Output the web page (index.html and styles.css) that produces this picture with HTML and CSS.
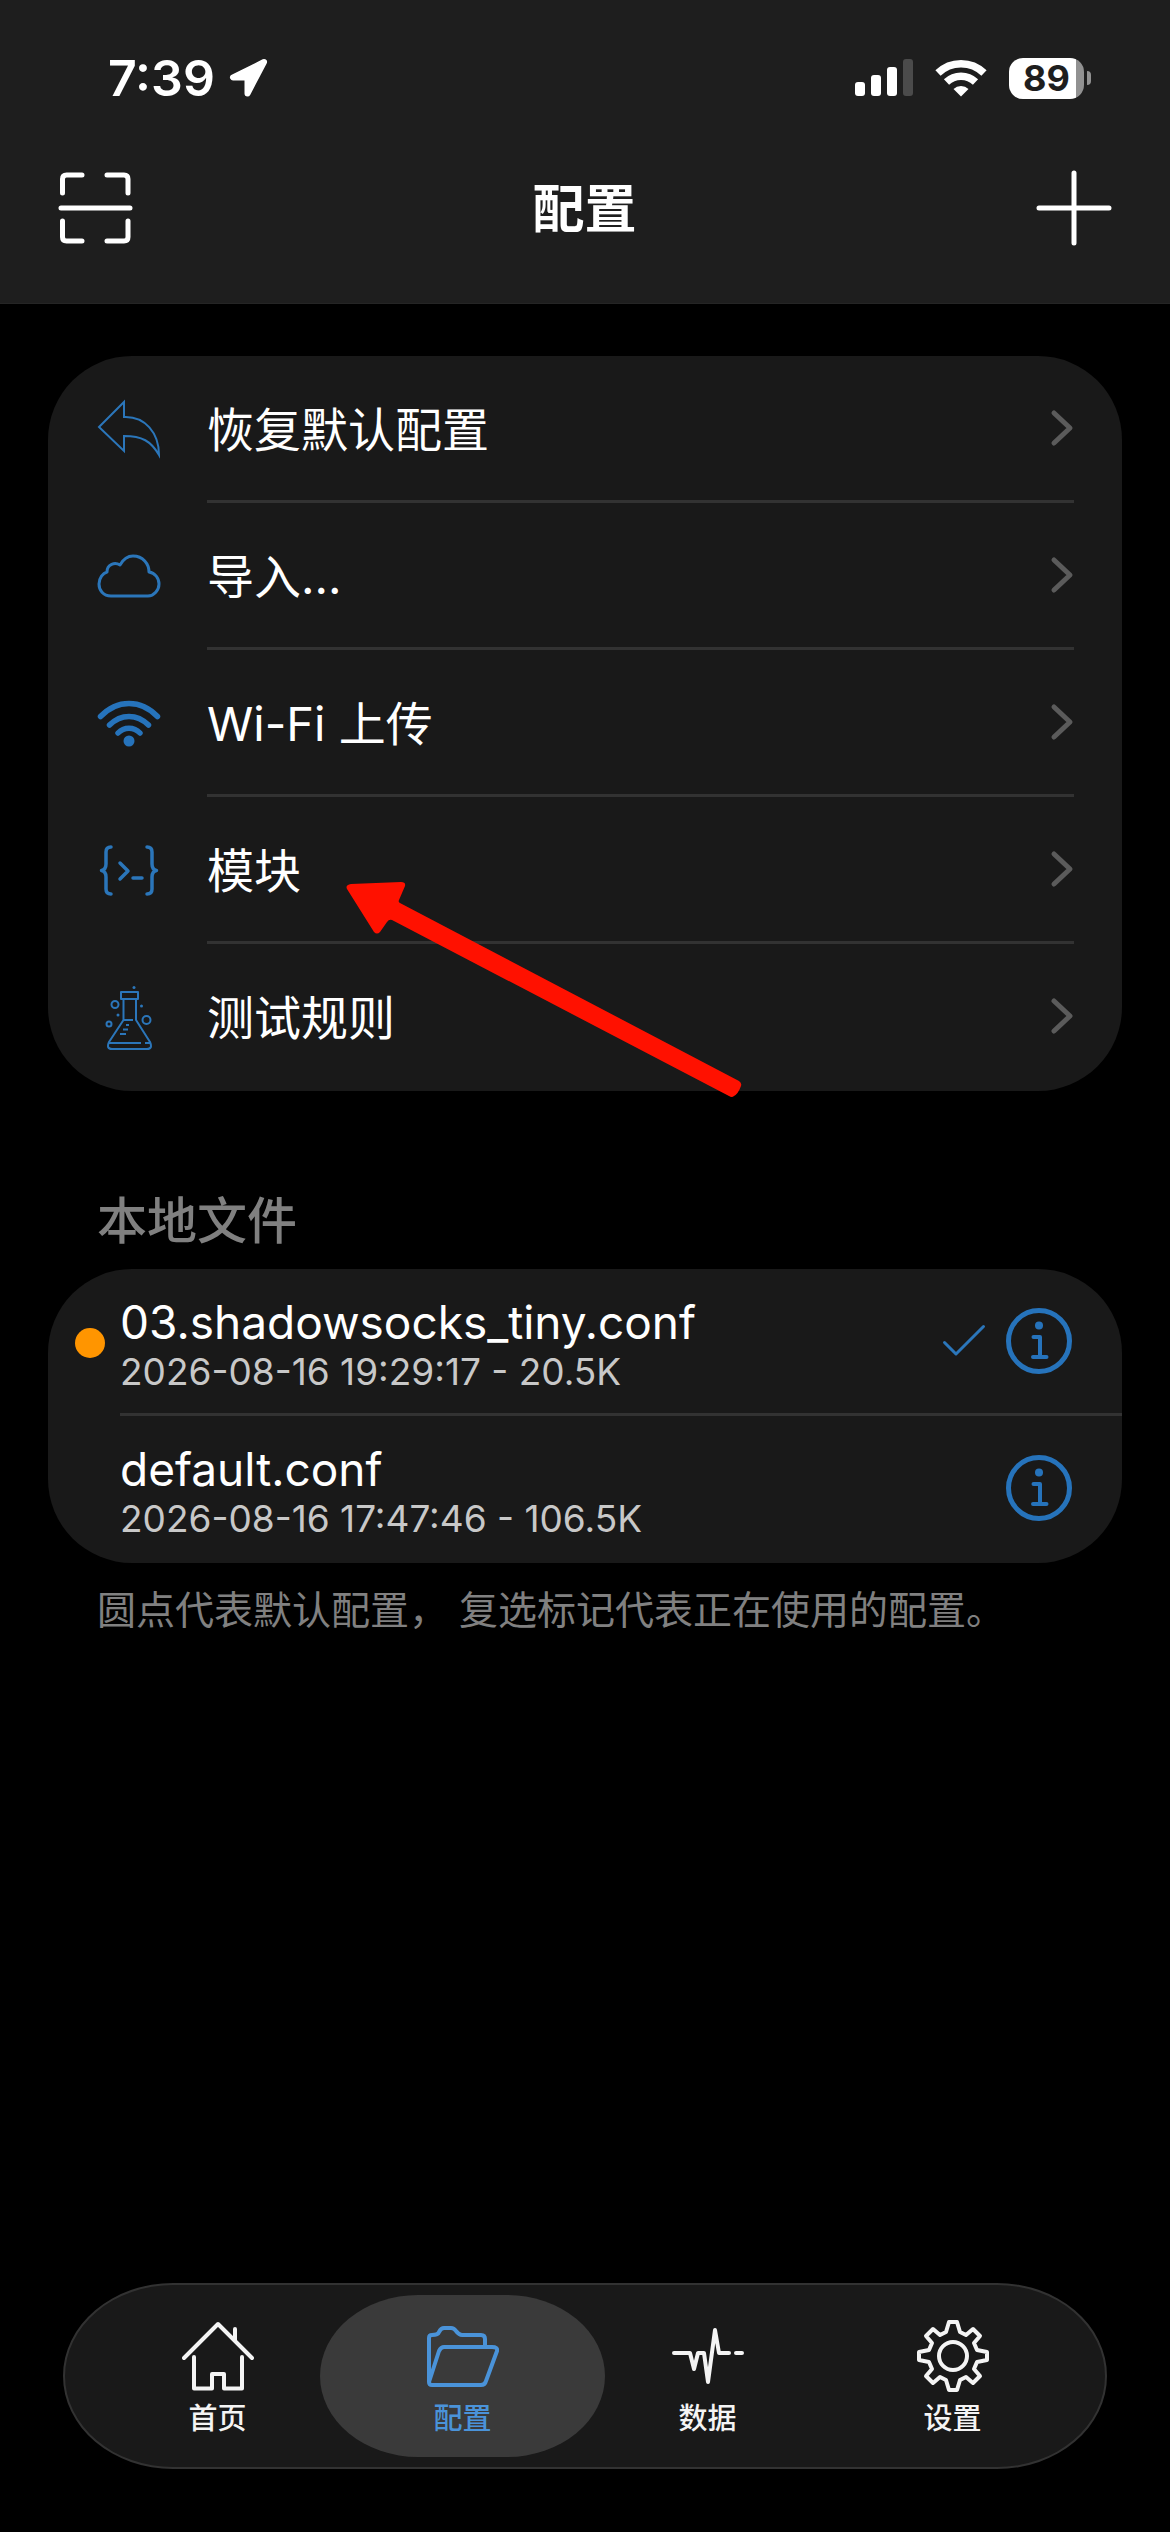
FILE: index.html
```html
<!DOCTYPE html>
<html lang="zh-CN">
<head>
<meta charset="utf-8">
<meta name="viewport" content="width=device-width, initial-scale=1">
<title>配置</title>
<link rel="stylesheet" href="styles.css">
</head>
<body>
<div class="app">
  <header class="header">
    <div class="status">
      <div class="status-left">
        <span class="time">7:39</span>
        <svg class="location" width="40" height="40" viewBox="0 0 40 40" aria-hidden="true"><path d="M35 4 4 19.500H18.500V35.500Z" fill="#fff" stroke="#fff" stroke-width="6" stroke-linejoin="round"/></svg>
      </div>
      <div class="status-right">
        <svg width="58" height="38" viewBox="0 0 58 38" aria-hidden="true"><g fill="#fff"><rect x="0" y="23" width="10" height="14" rx="3"/><rect x="16" y="16" width="10" height="21" rx="3"/><rect x="32" y="8" width="10" height="29" rx="3"/><rect x="48" y="0" width="10" height="37" rx="3" fill="#4b4b4b"/></g></svg>
        <svg width="52" height="38" viewBox="0 0 52 38" aria-hidden="true"><g fill="none" stroke="#fff" stroke-width="7.500"><path d="M3 14a33 33 0 0 1 46 0"/><path d="M11.500 23a21 21 0 0 1 29 0"/></g><path d="M18.500 30a11 11 0 0 1 15 0L26 37.500Z" fill="#fff"/></svg>
        <div class="battery"><span class="battery-body">89</span><span class="battery-nub"></span></div>
      </div>
    </div>
    <div class="nav">
      <button class="icon-button" type="button" aria-label="扫描">
        <svg width="76" height="76" viewBox="0 0 76 76" fill="none" stroke="#fff" stroke-width="5" stroke-linecap="round" stroke-linejoin="round"><path d="M5.500 23V9q0-4 4-4H25M50 5h17q4 0 4 4v14M71 51v16q0 4-4 4H50M25 71H9.500q-4 0-4-4V51M4 38h69"/></svg>
      </button>
      <h1 class="title">配置</h1>
      <button class="icon-button" type="button" aria-label="添加">
        <svg width="76" height="76" viewBox="0 0 76 76" fill="none" stroke="#fff" stroke-width="5" stroke-linecap="round"><path d="M38 3v70M3 38h70"/></svg>
      </button>
    </div>
  </header>

  <main class="content">
    <nav class="card menu">
      <a class="menu-row" href="#restore">
        <svg class="menu-icon" viewBox="0 0 64 64" fill="none" stroke="#2b76ba" stroke-width="2"><path d="M27 4V19C48 18 62 35 62 57C54 43 45 38 27 38V53L2 29Z"/></svg>
        <span class="menu-body"><span class="menu-label">恢复默认配置</span><svg class="chevron" viewBox="0 0 24 38"><path d="M4 4l16 15L4 34"/></svg></span>
      </a>
      <a class="menu-row" href="#import">
        <svg class="menu-icon" viewBox="0 0 64 64" fill="none" stroke="#2b76ba" stroke-width="3" stroke-linejoin="round"><path d="M14 51C6 51 2 45 2 39C2 33 6 28 10 27C10 19 18 17 23 20C27 13 32 11 36 11C46 11 52 19 52 27C58 28 62 33 62 39C62 45 57 51 51 51Z"/></svg>
        <span class="menu-body"><span class="menu-label">导入...</span><svg class="chevron" viewBox="0 0 24 38"><path d="M4 4l16 15L4 34"/></svg></span>
      </a>
      <a class="menu-row" href="#wifi">
        <svg class="menu-icon" viewBox="0 0 64 64" fill="none" stroke="#2673bb" stroke-width="5.500" stroke-linecap="round"><path d="M3.500 24.500C20 7 44 7 60.500 24.500M12.500 33C24 21.500 40 21.500 51.500 33M21 41C27 34.500 37 34.500 43 41"/><circle cx="32" cy="49" r="5.500" fill="#2673bb" stroke="none"/></svg>
        <span class="menu-body"><span class="menu-label">Wi-Fi 上传</span><svg class="chevron" viewBox="0 0 24 38"><path d="M4 4l16 15L4 34"/></svg></span>
      </a>
      <a class="menu-row" href="#modules">
        <svg class="menu-icon" viewBox="0 0 64 64" fill="none" stroke="#2b76ba" stroke-width="3.500" stroke-linecap="round" stroke-linejoin="round"><path d="M14 8C10 8 9 10 9 13V25C9 29 7 31 4.500 31.500C7 32 9 34 9 38V50C9 53 10 55 14 55M50 8C54 8 55 10 55 13V25C55 29 57 31 59.500 31.500C57 32 55 34 55 38V50C55 53 54 55 50 55M23 24l8 8-8 8M36 39h9"/></svg>
        <span class="menu-body"><span class="menu-label">模块</span><svg class="chevron" viewBox="0 0 24 38"><path d="M4 4l16 15L4 34"/></svg></span>
      </a>
      <a class="menu-row" href="#rules">
        <svg class="menu-icon" viewBox="0 0 64 64" fill="none" stroke="#2b76ba" stroke-width="2" stroke-linejoin="round"><path d="M24 6H41V13H24ZM26.500 13V34L12 56Q9 63 15 63H50Q56 63 53 56L39 34V13M27 34H36M12 57H44M48 57H53M29 39H32M26 43.500H31M23 48H29"/><circle cx="18" cy="18.500" r="3.500"/><circle cx="49.500" cy="34" r="4"/><circle cx="12" cy="38" r="2.500"/><g fill="#2b76ba" stroke="none"><circle cx="37" cy="1.500" r="1.500"/><circle cx="44.500" cy="20" r="1.500"/><circle cx="21" cy="29" r="1.500"/></g></svg>
        <span class="menu-body"><span class="menu-label">测试规则</span><svg class="chevron" viewBox="0 0 24 38"><path d="M4 4l16 15L4 34"/></svg></span>
      </a>
      <svg class="pointer" viewBox="0 0 398 218" aria-hidden="true"><path d="M5 4 55 2Q60 2 59 6L53 20Q52 22 54 23L393 201Q396 203 395 206Q392 214 388 216Q386 218 383 216L46 40Q43 39 41 42L34 52Q31 55 28 52L1 9Q-1 5 5 4Z" fill="#ff1100"/></svg>
    </nav>

    <section class="files">
      <h2 class="section-title">本地文件</h2>
      <ul class="card file-list">
        <li class="file-row">
          <span class="dot"></span>
          <div class="file-body">
            <div class="file-text"><span class="file-name">03.shadowsocks_tiny.conf</span><span class="file-meta">2026-08-16 19:29:17 - 20.5K</span></div>
            <svg class="check" viewBox="0 0 44 34" fill="none" stroke="#2b76ba" stroke-width="3" stroke-linecap="round" stroke-linejoin="round"><path d="M2.500 18.500 14 30 41.500 2.500"/></svg>
            <button class="info" type="button" aria-label="详情"><svg width="66" height="66" viewBox="0 0 66 66" fill="none" stroke="#2673bb" stroke-linecap="round" stroke-linejoin="round"><circle cx="33" cy="33" r="30.500" stroke-width="5"/><path d="M27.500 29H34V48.500M27 49H40.500" stroke-width="4"/><circle cx="33" cy="17.500" r="4" fill="#2673bb" stroke="none"/></svg></button>
          </div>
        </li>
        <li class="file-row">
          <span class="dot dot-empty"></span>
          <div class="file-body">
            <div class="file-text"><span class="file-name">default.conf</span><span class="file-meta">2026-08-16 17:47:46 - 106.5K</span></div>
            <button class="info" type="button" aria-label="详情"><svg width="66" height="66" viewBox="0 0 66 66" fill="none" stroke="#2673bb" stroke-linecap="round" stroke-linejoin="round"><circle cx="33" cy="33" r="30.500" stroke-width="5"/><path d="M27.500 29H34V48.500M27 49H40.500" stroke-width="4"/><circle cx="33" cy="17.500" r="4" fill="#2673bb" stroke="none"/></svg></button>
          </div>
        </li>
      </ul>
      <p class="hint">圆点代表默认配置， 复选标记代表正在使用的配置。</p>
    </section>
  </main>

  <nav class="tabs">
    <a class="tab" href="#home">
      <svg class="tab-icon" viewBox="0 0 72 72"><path d="M2 38 36 4l34 34M53 9v11M12 37v31.500h18V54h12v14.500h18V37"/></svg>
      <span>首页</span>
    </a>
    <a class="tab tab-active" href="#config" aria-current="page">
      <svg class="tab-icon" viewBox="0 0 72 72"><path d="M2 62V18q0-3 3-3 6 0 7-3 2-4 5-4h7q3 0 5 3 3 4 6 4h19q4 0 4 4v8M2 62 12 31q2-4 5-4h48q6 0 5 4L59 61q-1 4-5 4H5q-3 0-3-3Z"/></svg>
      <span>配置</span>
    </a>
    <a class="tab" href="#data">
      <svg class="tab-icon" viewBox="0 0 72 72"><path d="M2 33h16l4 16 4-16h6l4 29 7-52 4 23h10M64 33h6"/></svg>
      <span>数据</span>
    </a>
    <a class="tab" href="#settings">
      <svg class="tab-icon" viewBox="0 0 72 72"><path d="M32 2h8l3 10 6 3 7-6 7 7-6 7 3 7 10 2v8l-10 2-3 7 6 7-7 7-7-6-6 3-3 10h-8l-3-10-6-3-7 6-7-7 6-7-3-7-10-2v-8l10-2 3-7-6-7 7-7 7 6 6-3Z"/><circle cx="36" cy="36" r="14"/></svg>
      <span>设置</span>
    </a>
  </nav>
</div>
</body>
</html>
```
FILE: styles.css
```css
* {
  box-sizing: border-box;
}

body {
  margin: 0;
  background: #000;
  color: #fff;
  font-family: Inter, "Noto Sans CJK SC", sans-serif;
}

a {
  color: inherit;
  text-decoration: none;
}

button {
  padding: 0;
  border: 0;
  background: none;
  color: inherit;
}

svg {
  display: block;
  flex: none;
}

.app {
  display: flex;
  flex-direction: column;
  min-height: 100vh;
}

.header {
  padding-bottom: 29px;
  background: #1e1e1e;
  border-bottom: 1px solid #252525;
}

.status {
  display: flex;
  justify-content: space-between;
  align-items: center;
  padding: 48px 79px 0 108px;
}

.status-left {
  display: flex;
  align-items: center;
  gap: 14px;
}

.time {
  font-size: 50px;
  line-height: 60px;
  font-weight: 600;
}

.status-right {
  display: flex;
  align-items: center;
  gap: 22px;
}

.battery {
  display: flex;
  align-items: center;
  gap: 3px;
}

.battery-body {
  width: 75px;
  border-radius: 14px;
  background: linear-gradient(to right, #fff 67px, #919191 67px);
  color: #1e1e1e;
  font-size: 36px;
  line-height: 41px;
  font-weight: 700;
  text-align: center;
}

.battery-nub {
  width: 4px;
  height: 14px;
  border-radius: 0 4px 4px 0;
  background: #919191;
}

.nav {
  display: flex;
  justify-content: space-between;
  align-items: center;
  margin-top: 34px;
  padding: 0 58px 0 57px;
  height: 132px;
}

.title {
  margin: 0;
  padding-top: 4px;
  font-size: 52px;
  line-height: 60px;
  font-weight: 700;
}

.content {
  padding: 52px 48px 48px;
}

.card {
  background: #191919;
  border-radius: 84px;
  overflow: hidden;
}

.menu {
  position: relative;
  overflow: visible;
}

.menu-row {
  display: flex;
  align-items: center;
  gap: 46px;
  padding: 0 48px 0 49px;
}

.menu-icon {
  width: 64px;
  height: 64px;
}

.menu-body {
  display: flex;
  flex: 1;
  justify-content: space-between;
  align-items: center;
  height: 147px;
  border-bottom: 3px solid #323232;
}

.menu-label {
  padding-top: 4px;
  font-size: 47px;
  line-height: 60px;
}

.menu-row:nth-last-child(2) .menu-body {
  border-color: transparent;
}

.chevron {
  width: 24px;
  height: 38px;
  fill: none;
  stroke: #5b5b5b;
  stroke-width: 5;
  stroke-linecap: round;
  stroke-linejoin: round;
}

/* Annotation drawn over the menu */
.pointer {
  position: absolute;
  left: 298px;
  top: 524px;
  width: 398px;
  height: 218px;
  pointer-events: none;
}

.section-title {
  margin: 100px 0 0;
  padding: 0 49px 18px;
  color: #808080;
  font-size: 50px;
  line-height: 60px;
  font-weight: 500;
}

.file-list {
  margin: 0;
  padding: 0;
  list-style: none;
}

.file-row {
  display: flex;
  align-items: center;
  gap: 15px;
  padding-left: 27px;
}

.dot {
  flex: none;
  width: 30px;
  height: 30px;
  border-radius: 50%;
  background: #ff9500;
}

.dot-empty {
  background: none;
}

.file-body {
  display: flex;
  flex: 1;
  align-items: center;
  gap: 20px;
  height: 147px;
  padding-right: 50px;
  border-bottom: 3px solid #323232;
}

.file-row:last-child .file-body {
  border-color: transparent;
}

.file-text {
  display: flex;
  flex: 1;
  flex-direction: column;
  padding-top: 5px;
}

.file-name {
  font-size: 46px;
  line-height: 56px;
}

.file-meta {
  color: #c8c8c8;
  font-size: 37px;
  line-height: 44px;
}

.check {
  width: 44px;
  height: 34px;
}

.hint {
  margin: 0;
  padding: 17px 49px;
  color: #808080;
  font-size: 39px;
  line-height: 60px;
}

.tabs {
  display: grid;
  grid-template-columns: repeat(4, 1fr);
  margin: auto 63px 63px;
  padding: 10px 30px;
  border: 2px solid #323232;
  border-radius: 110px / 93px;
  background: #191919;
}

.tab {
  display: flex;
  flex-direction: column;
  align-items: center;
  gap: 6px;
  height: 162px;
  margin: 0 -20px;
  padding-top: 25px;
  border-radius: 98px / 81px;
  color: #f4f4f4;
  font-size: 29px;
  line-height: 42px;
  font-weight: 500;
}

.tab-active {
  background: #3a3a3a;
  color: #4a93d9;
}

.tab-icon {
  width: 72px;
  height: 72px;
  fill: none;
  stroke: currentColor;
  stroke-width: 4;
  stroke-linecap: round;
  stroke-linejoin: round;
}
```
